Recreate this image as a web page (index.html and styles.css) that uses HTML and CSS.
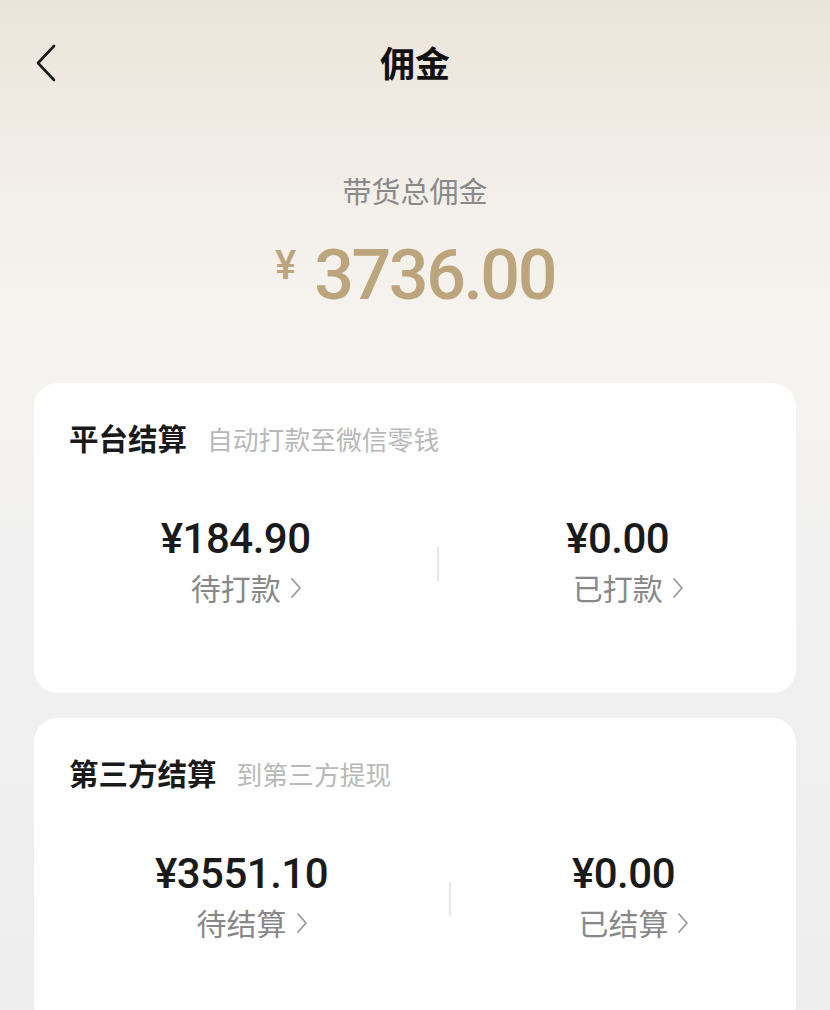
FILE: index.html
```html
<!DOCTYPE html>
<html lang="zh-CN">
<head>
<meta charset="utf-8">
<title>佣金</title>
<link rel="stylesheet" href="styles.css">
</head>
<body>
<div class="page">
  <header class="nav">
    <span class="back">
      <svg width="22" height="38" viewBox="0 0 22 38"><path d="M19 2 L3 19 L19 36" fill="none" stroke="#1a1a1a" stroke-width="2.6" stroke-linecap="round" stroke-linejoin="round"/></svg>
    </span>
    <h1 class="nav-title">佣金</h1>
  </header>

  <section class="summary">
    <div class="summary-label">带货总佣金</div>
    <div class="summary-amount"><span class="yen">¥</span><span class="num">3736.00</span></div>
  </section>

  <section class="card">
    <div class="card-head">
      <span class="card-title">平台结算</span>
      <span class="card-sub">自动打款至微信零钱</span>
    </div>
    <div class="stats">
      <div class="stat">
        <div class="stat-amount">¥184.90</div>
        <div class="stat-label">待打款<svg class="chev" width="12" height="22" viewBox="0 0 12 22"><path d="M2 2 L10 11 L2 20" fill="none" stroke="#9a9a9a" stroke-width="1.8" stroke-linecap="round" stroke-linejoin="round"/></svg></div>
      </div>
      <div class="divider"></div>
      <div class="stat">
        <div class="stat-amount">¥0.00</div>
        <div class="stat-label">已打款<svg class="chev" width="12" height="22" viewBox="0 0 12 22"><path d="M2 2 L10 11 L2 20" fill="none" stroke="#9a9a9a" stroke-width="1.8" stroke-linecap="round" stroke-linejoin="round"/></svg></div>
      </div>
    </div>
  </section>

  <section class="card">
    <div class="card-head">
      <span class="card-title">第三方结算</span>
      <span class="card-sub">到第三方提现</span>
    </div>
    <div class="stats">
      <div class="stat">
        <div class="stat-amount">¥3551.10</div>
        <div class="stat-label">待结算<svg class="chev" width="12" height="22" viewBox="0 0 12 22"><path d="M2 2 L10 11 L2 20" fill="none" stroke="#9a9a9a" stroke-width="1.8" stroke-linecap="round" stroke-linejoin="round"/></svg></div>
      </div>
      <div class="divider"></div>
      <div class="stat">
        <div class="stat-amount">¥0.00</div>
        <div class="stat-label">已结算<svg class="chev" width="12" height="22" viewBox="0 0 12 22"><path d="M2 2 L10 11 L2 20" fill="none" stroke="#9a9a9a" stroke-width="1.8" stroke-linecap="round" stroke-linejoin="round"/></svg></div>
      </div>
    </div>
  </section>
</div>
</body>
</html>
```

FILE: styles.css
```css
* { box-sizing: border-box; }
html, body { margin: 0; padding: 0; }
body {
  font-family: "Noto Sans CJK SC", "Noto Sans", sans-serif;
  background: linear-gradient(180deg, #ebe4da 0px, #f3efe9 200px, #f6f4f0 330px, #f1f1f1 560px, #eeeeee 1010px);
  min-height: 1010px;
  color: #1a1a1a;
}
.page {
  width: 830px;
  overflow: hidden;
  padding-bottom: 40px;
}
.nav {
  height: 124px;
  display: flex;
  align-items: center;
  justify-content: center;
  position: relative;
}
.back {
  position: absolute;
  left: 35px;
  top: 44px;
  width: 22px;
  height: 38px;
  display: flex;
}
.nav-title {
  margin: 0;
  font-size: 35px;
  font-weight: 700;
  line-height: 40px;
  color: #111;
}
.summary {
  padding-top: 46px;
  display: flex;
  flex-direction: column;
  align-items: center;
}
.summary-label {
  font-size: 29px;
  line-height: 40px;
  color: #8a8a8a;
}
.summary-amount {
  margin-top: 25px;
  display: flex;
  align-items: flex-start;
  color: #bca57c;
  font-family: Roboto, "Noto Sans", sans-serif;
  font-weight: 500;
}
.yen {
  font-size: 40px;
  line-height: 40px;
  margin-top: 11px;
  margin-right: 18px;
}
.num {
  font-size: 70px;
  line-height: 80px;
  letter-spacing: -2.5px;
}
.card {
  margin: 68px 34px 0;
  background: #ffffff;
  border-radius: 24px;
  padding: 34px 0 86px;
}
.card + .card {
  margin-top: 25px;
}
.card-head {
  padding-left: 35px;
  display: flex;
  align-items: baseline;
  line-height: 40px;
}
.card-title {
  font-size: 29.5px;
  font-weight: 700;
  color: #1a1a1a;
}
.card-sub {
  margin-left: 20px;
  font-size: 25.8px;
  color: #b8b8b8;
}
.stats {
  margin-top: 55px;
  display: flex;
  justify-content: space-evenly;
  align-items: center;
}
.stat {
  display: flex;
  flex-direction: column;
  align-items: center;
}
.stat-amount {
  font-family: Roboto, "Noto Sans", sans-serif;
  font-weight: 500;
  font-size: 42px;
  line-height: 50px;
  letter-spacing: -0.5px;
  color: #1a1a1a;
}
.stat-label {
  margin-top: 3px;
  font-size: 30px;
  line-height: 40px;
  color: #888888;
  display: flex;
  align-items: center;
}
.chev {
  margin-left: 9px;
  margin-right: -21px;
  margin-top: 2px;
}
.divider {
  width: 2px;
  height: 34px;
  background: #e6e6e6;
  margin-top: 6px;
}
```
